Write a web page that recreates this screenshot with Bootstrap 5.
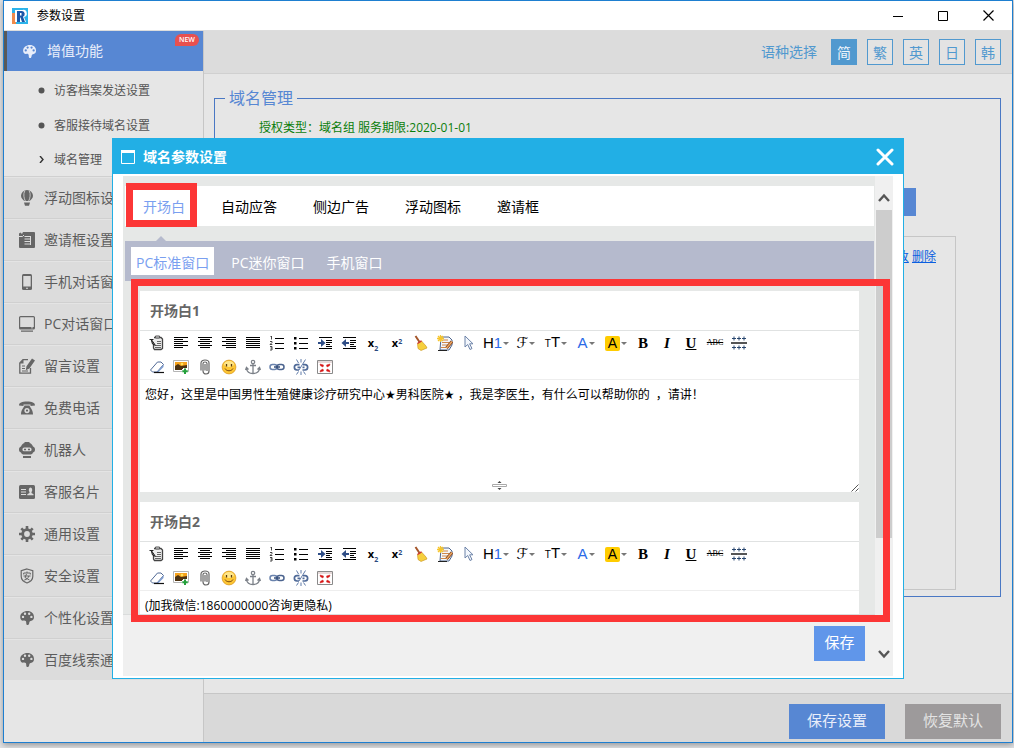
<!DOCTYPE html>
<html lang="zh-CN">
<head>
<meta charset="utf-8">
<meta name="viewport" content="width=device-width, initial-scale=1">
<title>参数设置</title>
<link href="https://cdn.jsdelivr.net/npm/bootstrap@5.3.0/dist/css/bootstrap.min.css" rel="stylesheet">
<style>
  body { font: 14px/20px "Open Sans", "DejaVu Sans", "Noto Sans CJK SC", sans-serif; background: #e2e3e5; color: #555; }
  button, textarea { font-family: inherit; }
  button { border: 0; background: none; padding: 0; color: inherit; }
  a { color: inherit; text-decoration: none; }
  svg { display: block; flex: none; }
  .fs12 { font-size: 12px; }

  .app-shell { min-height: 100vh; padding: 0 1px 5px 3px; }
  .app-window { border: 1px solid #1e7fd0; box-shadow: 0 2px 6px rgba(0,0,0,.35); background: #e6e6e6; }
  .title-bar { height: 30px; background: #fff; color: #000; padding: 0 18px 0 8px; border-bottom: 1px solid #ddd; gap: 9px; }
  .title-bar .win-controls { gap: 35px; }

  .side-bar { width: 200px; border-right: 1px solid #c6c6c6; }
  .side-top { height: 40px; background: #5787d3; border-left: 3px solid #595959; color: #e9eefa; padding-left: 15px; gap: 10px; }
  .new-tag { position: absolute; top: 3px; right: 4px; width: 24px; height: 12px; border-radius: 6px 6px 6px 0; background: #e8504f; color: #fff; font-size: 7px; font-weight: 600; line-height: 12px; text-align: center; }
  .side-sub { padding: 2px 0 0; }
  .side-sub a { height: 35px; padding-left: 34px; gap: 9px; }
  .side-sub li:last-child a { height: 33px; }
  .side-item { height: 42px; background: #dcdcdc; border-top: 1px solid #d0d0d0; box-shadow: inset 0 1px #e4e4e4; padding-left: 15px; gap: 9px; color: #5c5c5c; }
  .side-item svg { color: #666; }

  .lang-bar { height: 43px; background: #dcdcdc; border-bottom: 1px solid #d0d0d0; padding-right: 11px; gap: 10px; color: #5199cf; }
  .lang-bar button { width: 26px; height: 26px; border: 1px solid #5199cf; background: #e3e3e3; line-height: 26px; }
  .lang-bar button.active { background: #5199cf; color: #eef5fb; }
  .domain-area { padding: 15px 11px 0 10px; }
  .domain-set { border: 1px solid #4a78c4; padding: 0 44px 6px; }
  .domain-set legend { float: none; width: auto; margin: 0 0 0 -34px; padding: 0 4px; font-size: 16px; line-height: 18px; color: #5787d3; }
  .licence { color: #0a7d0a; padding-top: 11px; line-height: 20px; margin-bottom: 50px; }
  .add-btn { width: 96px; height: 28px; background: #5787d3; color: #fff; margin-right: 40px; }
  .domain-box { border: 1px solid #c6c6c6; min-height: 354px; margin-top: 20px; padding: 10px 19px; }
  .domain-box a { color: #0b5fe0; text-decoration: underline; }
  .foot-bar { background: #d9d9d9; border-top: 1px solid #c6c6c6; padding: 10px 11px 3px; gap: 20px; }
  .foot-bar button { width: 96px; height: 35px; padding-bottom: 3px; font-size: 15px; background: #5787d3; color: #e9eefa; }
  .foot-bar button.reset { background: #9d9a9b; color: #e4e4e4; }

  .dlg { position: absolute; top: 138px; left: 112px; right: 110px; height: 541px; border: 1px solid #22afe5; background: #fff; }
  .dlg-head { height: 35px; background: #22afe5; color: #fff; font-weight: 700; padding: 0 9px 0 8px; gap: 8px; }
  .dlg-body { padding: 2px 10px; min-height: 0; }
  .dlg-main { min-width: 0; }
  .dlg-scroll { background: #e6e8e7; padding: 10px 1px 0 2px; min-height: 0; overflow: hidden; border-bottom: 1px solid #dadcdc; }
  .dlg-foot { height: 61px; background: #f0f0f0; padding: 11px 10px 0; }
  .dlg-foot button { width: 51px; height: 35px; padding-bottom: 3px; font-size: 15px; background: #6096ea; color: #fff; }
  .tab-row { height: 40px; background: #fff; flex: none; color: #000; }
  .tab-row button { padding: 0 18px; height: 40px; line-height: 42px; }
  .tab-row button.active, .sub-row button.active { color: #7a9ff0; }
  .sub-row { position: relative; height: 40px; margin-top: 15px; background: #b5bacd; color: #fff; padding: 0 6px; gap: 12px; flex: none; }
  .sub-row::before { content: ""; position: absolute; left: 31px; top: -5px; border: 5px solid transparent; border-top: 0; border-bottom-color: #b5bacd; }
  .sub-row button { height: 28px; padding: 0 5px; line-height: 32px; }
  .sub-row button.active { background: #fff; }
  .mark-box { position: absolute; border: 7px solid #fc3636; pointer-events: none; }
  .mark-tab { top: -3px; bottom: -1px; left: 1px; right: 6px; }
  .mark-editors { top: 140px; left: 18px; right: 13px; bottom: 56px; }
  .editors { padding: 10px 15px 0; gap: 10px; }
  .editor { background: #fff; }
  .editor h2 { font-size: 14px; line-height: 39px; font-weight: 700; color: #666; margin: 0; padding-left: 10px; border-bottom: 1px solid #e0e2e2; }
  .tool-bar { padding: 0 5px; border-bottom: 1px solid #eee; color: #000; }
  .tool-bar button { width: 24px; height: 24px; display: flex; align-items: center; justify-content: center; }
  .tool-bar button.drop { width: 30px; gap: 1px; }
  .drop::after { content: ""; border: 3px solid transparent; border-top-color: #777; border-bottom: 0; }
  .editor textarea { display: block; width: 100%; height: 100px; border: 0; padding: 5px 5px 0; font-size: 12px; line-height: 20px; color: #000; resize: none; outline: 0; background: #fff; }
  .editor .grip-row { height: 12px; display: grid; grid-template-columns: 1fr auto 1fr; align-items: end; }
  .f-san { font-family: "Liberation Sans", sans-serif; font-size: 15px; }
  .t-small { font-size: 10px; }
  .c-blue { color: #2a6ae8; }
  .f-ser { font-family: "Liberation Serif", serif; font-weight: 700; font-size: 15px; line-height: 18px; }
  .f-scr { font-family: "DejaVu Sans", sans-serif; font-size: 15px; line-height: 16px; }
  .hl { background: #fc0; border-radius: 2px; width: 15px; line-height: 15px; font-size: 14px; }
  .f-ser.strike { font-size: 8px; font-weight: 400; line-height: 10px; }
  .pos-x { font-size: 11px; font-weight: 700; line-height: 14px; }
  .pos-x sub, .pos-x sup { font-size: 7px; color: #2b4a80; }
  .pos-x sub { bottom: -4px; }

  .bar-col { width: 18px; background: #f0f0f0; padding: 16px 1px 16px 1px; }
  .bar-thumb { flex: 0 0 328px; background: #cdcdcd; margin-top: 7px; }
</style>
</head>
<body>
<svg width="0" height="0" class="position-absolute" aria-hidden="true">
  <symbol id="palette" viewBox="0 0 16 16"><path fill="currentColor" fill-rule="evenodd" d="M8.500 1C4.500 1 1.200 3.500 1.200 7c0 2.600 1.500 3.900 3.300 3.600 1.700-.3 2.700.4 2.700 1.800 0 1.600.3 2.600 1.500 2.600s1.400-1.300 1.600-2.500c.2-1.200 1-1.600 2.200-1.800 1.500-.2 2.500-1.600 2.500-3.700C15 3.500 12.300 1 8.500 1zM4 5.700a1.200 1.200 0 1 0 0 2.400 1.200 1.200 0 0 0 0-2.400zM6 2.600a1.200 1.200 0 1 0 0 2.400 1.200 1.200 0 0 0 0-2.400zm4.200 0a1.200 1.200 0 1 0 0 2.400 1.200 1.200 0 0 0 0-2.400zm2.200 3.100a1.200 1.200 0 1 0 0 2.400 1.200 1.200 0 0 0 0-2.400z"/></symbol>
  <symbol id="balloon" viewBox="0 0 16 16"><path fill="currentColor" d="M8 0a6 5.800 0 0 0-6 5.800C2 8.200 4 9.800 5.300 11h5.400C12 9.800 14 8.200 14 5.800A6 5.800 0 0 0 8 0zM5 12.500h6L10 15.800H6z"/><path d="M5.800.8C4 4 5 8.500 6.300 11M10.200.8c1.800 3.200.8 7.700-.5 10.200" stroke="#dcdcdc" fill="none" stroke-width=".8"/></symbol>
  <symbol id="invite" viewBox="0 0 16 16"><path fill="currentColor" d="M0 1.500l1.500-1L3 2l1-2h11a1 1 0 0 1 1 1v14a1 1 0 0 1-1 1H1a1 1 0 0 1-1-1z"/><path d="M0 4.500h3.500L5 3M5.500 4.500h5.500M5.500 7h5.500M5.500 9.500h5.500M5.500 12h5.500M11.500 4v9" stroke="#dcdcdc" fill="none"/></symbol>
  <symbol id="phone" viewBox="0 0 16 16"><rect x="3" y="0" width="10" height="16" rx="1.500" fill="currentColor"/><path fill="#dcdcdc" d="M4.300 2h7.400v10.500H4.300zM7 13.800h2v1H7z"/></symbol>
  <symbol id="monitor" viewBox="0 0 16 16"><rect x=".6" y=".6" width="14.800" height="12.400" rx="1" fill="none" stroke="currentColor" stroke-width="1.200"/><path fill="currentColor" d="M1 11h14v2H1zM2 14.500h12v1.200H2z"/><path fill="#dcdcdc" d="M12 11.500h2v.8h-2z"/></symbol>
  <symbol id="note" viewBox="0 0 16 16"><path d="M9 1.600H4L.8 5v10.200h10.700V10" fill="none" stroke="currentColor" stroke-width="1.300"/><path fill="currentColor" d="M4.500 1v4.500H.5zM13 .5l3 2-5.600 8-3.600 1.700.7-4z"/><path d="M3 8h3M3 10.500h3M3 13h6" stroke="currentColor" stroke-width="1.200"/></symbol>
  <symbol id="tele" viewBox="0 0 16 16"><path fill="currentColor" fill-rule="evenodd" d="M0 5.500C0 2.500 3 1.500 8 1.500s8 1 8 4l-4.500.5V4.500h-7V6zM5.500 5.500h5c.5 2 3.500 4 3.500 9H2c0-5 3-7 3.500-9zm2.500 2.500a2.600 2.600 0 1 0 0 5.200A2.600 2.600 0 0 0 8 8zm0 1.500a1.100 1.100 0 1 1 0 2.200 1.100 1.100 0 0 1 0-2.200z"/></symbol>
  <symbol id="robot" viewBox="0 0 16 16"><path fill="currentColor" fill-rule="evenodd" d="M5.500 0h5v1C12.500 1.500 13.500 3 14 4.500c1.500.5 2 1.500 2 3s-.5 2.500-2 3c-.5 1.500-1.500 2-3 2H5c-1.500 0-2.500-.5-3-2-1.500-.5-2-1.500-2-3s.5-2.500 2-3C2.500 3 3.500 1.500 5.500 1zM5.300 5.500a1.900 1.900 0 0 0 0 3.800h5.400a1.900 1.900 0 0 0 0-3.800zM4 14h8v2H4z"/><path d="M5 7.500h6" stroke="currentColor" stroke-width="1.400" stroke-dasharray="2"/></symbol>
  <symbol id="idcard" viewBox="0 0 16 16"><rect y="1" width="16" height="14" rx="1.500" fill="currentColor"/><path d="M2 5.500h5M2 8h5M2 10.500h5" stroke="#dcdcdc"/><path fill="#dcdcdc" d="M11.500 3.500a2 2.500 0 0 1 1 4.400v1l2 1.300v1H8.300v-1l2.200-1.300v-1a2 2.500 0 0 1 1-4.400z"/></symbol>
  <symbol id="gear" viewBox="0 0 16 16"><circle cx="8" cy="8" r="4.300" fill="none" stroke="currentColor" stroke-width="2.800"/><path d="M8 0v3M8 13v3M0 8h3M13 8h3M2.300 2.300l2 2M11.700 11.700l2 2M2.300 13.700l2-2M11.700 4.300l2-2" stroke="currentColor" stroke-width="2.600"/></symbol>
  <symbol id="shield" viewBox="0 0 16 16"><path d="M8 1l5.800 1.800v5.500C13.800 12 11 14 8 15 5 14 2.200 12 2.200 8.300V2.800z" fill="none" stroke="currentColor" stroke-width="1.200"/><path d="M8 3.500V5M4.700 6.500V5h6.600v1.500M4.500 8h7M7.500 6L6 9.500l4.500 2.500M9.800 8c-.5 2-2 3.500-4.500 4" fill="none" stroke="currentColor"/></symbol>

  <symbol id="t-paste" viewBox="0 0 16 16"><path d="M5 2.500h7l1.500 1.500v9.500L12 14.500H5.500L4.500 13V9" fill="#eee" stroke="#444" stroke-width="1.300"/><path d="M6.500 1h4v2h-4z" fill="#ddd" stroke="#555"/><path d="M8 6.500h4M8 8.500h4M7 10.500h5M6 12.500h6" stroke="#666"/><path d="M.5 4.500h4M2 4l4.500 6.500L3.500 9z" stroke="#222" fill="#777"/></symbol>
  <symbol id="t-left" viewBox="0 0 16 16"><path d="M1 2.500h14M1 4.500h9M1 6.500h14M1 8.500h9M1 10.500h14M1 12.500h9" stroke="#000" shape-rendering="crispEdges"/></symbol>
  <symbol id="t-center" viewBox="0 0 16 16"><path d="M1 2.500h14M3 4.500h10M1 6.500h14M3 8.500h10M1 10.500h14M3 12.500h10" stroke="#000" shape-rendering="crispEdges"/></symbol>
  <symbol id="t-right" viewBox="0 0 16 16"><path d="M1 2.500h14M5 4.500h10M1 6.500h14M5 8.500h10M1 10.500h14M5 12.500h10" stroke="#000" shape-rendering="crispEdges"/></symbol>
  <symbol id="t-full" viewBox="0 0 16 16"><path d="M1 2.500h14M1 4.500h14M1 6.500h14M1 8.500h14M1 10.500h14M1 12.500h14" stroke="#000" shape-rendering="crispEdges"/></symbol>
  <symbol id="t-ol" viewBox="0 0 16 16"><path d="M6 3.500h9M6 8.500h9M6 13.500h9" stroke="#000" shape-rendering="crispEdges"/><path d="M1.500 2L2.500 1v3.500M1 6.500h2v1L1 9.500h2.300M1 11.500h2v3.500H1M1.500 13h1.500" stroke="#333" stroke-width=".9" fill="none"/></symbol>
  <symbol id="t-ul" viewBox="0 0 16 16"><path d="M6 3.500h9M6 8.500h9M6 13.500h9" stroke="#000" shape-rendering="crispEdges"/><path d="M1 2h2.500v2.500H1zM1 7h2.500v2.500H1zM1 12h2.500v2.500H1z"/></symbol>
  <symbol id="t-in" viewBox="0 0 16 16"><path d="M2 2.500h13M9 5.500h6M9 7.500h6M9 9.500h4M9 11.500h6M2 13.500h13" stroke="#000" shape-rendering="crispEdges"/><path d="M1 7h3V4L8.500 8 4 12V9H1z" fill="#2e4d86"/></symbol>
  <symbol id="t-out" viewBox="0 0 16 16"><path d="M2 2.500h13M9 5.500h6M9 7.500h6M9 9.500h4M9 11.500h6M2 13.500h13" stroke="#000" shape-rendering="crispEdges"/><path d="M8 7H5V4L.5 8 5 12V9h3z" fill="#2e4d86"/></symbol>
  <symbol id="t-broom" viewBox="0 0 16 16"><path d="M2.500 1L6.500 7" stroke="#a4562a" stroke-width="2"/><path d="M4.500 8.500l4-2.500L13 11l1 2-6 2.500-3-2z" fill="#f6cf3e" stroke="#c8921a" stroke-width=".6"/><path d="M4.500 8.500l4-2.700" stroke="#c33" stroke-width="1.400"/></symbol>
  <symbol id="t-format" viewBox="0 0 16 16"><path d="M4 2h8l3 3v5l-3 5H3z" fill="#f4f7fb" stroke="#4c648c"/><path d="M6 5h5M5 7.500h7M5 10h6M4 12.500h5" stroke="#d0884a"/><path d="M3.500 0v7M0 3.500h7M1 1l5 5M6 1L1 6" stroke="#f7c52b" stroke-width="1.300"/><path d="M15 6.500L9.500 13" stroke="#7b3f1d" stroke-width="3"/><path d="M15 6.500L9.500 13" stroke="#f0a860" stroke-width="1.500"/><path d="M1 15.500h9" stroke="#222"/></symbol>
  <symbol id="t-cursor" viewBox="0 0 16 16"><path d="M4 1v11l2.700-2.500L9 14.500l2-1-2.400-4.700H12z" fill="#f3f7fd" stroke="#6d83a8"/></symbol>
  <symbol id="t-break" viewBox="0 0 16 16"><path d="M0 8h16" stroke="#555" stroke-width="2"/><path d="M1 3.500h4M6 3.500h4M11 3.500h4M3 1.500v4M8 1.500v4M13 1.500v4M1 12.500h4M6 12.500h4M11 12.500h4M3 10.500v4M8 10.500v4M13 10.500v4" stroke="#29466f"/></symbol>
  <symbol id="t-eraser" viewBox="0 0 16 16"><path d="M1.500 11L8.500 3h3.500l2.500 2.500L8 13H3.500z" fill="#fff" stroke="#526a96"/><path d="M8 13l6.500-7.500v2.500L9 13.500z" fill="#7f9cd0"/><path d="M5 13.500h10" stroke="#111" stroke-width="1.200"/></symbol>
  <symbol id="t-image" viewBox="0 0 16 16"><path d="M.5 1.500h15v11H.5z" fill="#fff" stroke="#b5b5b5"/><path d="M2 3h12v5H2z" fill="#f6a21c"/><path d="M2 7l3-2 3 2 6-1v5H2z" fill="#4d3210"/><circle cx="9" cy="5" r="1.300" fill="#ffe35a"/><path d="M12 9v6M9 12h6" stroke="#fff" stroke-width="4"/><path d="M12 9.500v5.500M9.300 12.300h5.500" stroke="#25a03c" stroke-width="2"/></symbol>
  <symbol id="t-clip" viewBox="0 0 16 16"><path d="M8 5v6.500M4 11.500V4c0-4 8-4 8 0v8c0 4-6 4-6 0V4.500c0-2 4-2 4 0V12" fill="none" stroke="#666" stroke-width="1.200"/></symbol>
  <symbol id="t-smile" viewBox="0 0 16 16"><circle cx="8" cy="8" r="6.900" fill="#fdc634" stroke="#d7941b" stroke-width=".7"/><ellipse cx="8" cy="5" rx="5" ry="3" fill="#ffe68a"/><path d="M5.500 5v2.500M10.500 5v2.500" stroke="#5a3a0c" stroke-width="1.300"/><path d="M4 9.500c1.500 3 6.500 3 8 0" fill="none" stroke="#7b4a11"/></symbol>
  <symbol id="t-anchor" viewBox="0 0 16 16"><circle cx="8" cy="3" r="1.700" fill="none" stroke="#7b8088" stroke-width="1.200"/><path d="M8 5v9.500M5 6.500h6M1.500 9.500C2 13 5 14.500 8 14.500s6-1.500 6.500-5M.5 11l1-2.500 2 2M15.500 11l-1-2.500-2 2" fill="none" stroke="#7b8088" stroke-width="1.300"/></symbol>
  <symbol id="t-link" viewBox="0 0 16 16"><rect x="1" y="5.500" width="7" height="5" rx="2.500" fill="none" stroke="#6a83ad" stroke-width="1.500"/><rect x="8" y="5.500" width="7" height="5" rx="2.500" fill="none" stroke="#4c648f" stroke-width="1.500"/><path d="M5 8h6" stroke="#334c78" stroke-width="1.500"/></symbol>
  <symbol id="t-unlink" viewBox="0 0 16 16"><path d="M6.500 5.700H4C.5 5.700.5 11 4 11h2M10 5.700h2c3.500 0 3.500 5.300 0 5.300H9.500M4.500 8.300H7M9.500 8.300h2" fill="none" stroke="#4f6a98" stroke-width="1.700"/><path d="M8 0v3.500M3.500.5l2 3.500M12.500.5L6 11M8 12.500V16M3.500 15.500l2-3M12.500 15.500l-2-3" stroke="#5f7aa8"/></symbol>
  <symbol id="t-screen" viewBox="0 0 16 16"><path d="M.5 1.500h15v13H.5z" fill="#fff" stroke="#8a8a8a"/><path d="M1 3h14" stroke="#cdb5b5"/><path d="M3 5l3.500 1L6 8 3.500 6.800zM13 5L9.500 6l.5 2 2.500-1.200zM3 13l3.500-1L6 10l-2.500 1.200zM13 13l-3.500-1 .5-2 2.500 1.200z" fill="#d11" stroke="#c22" stroke-width=".5"/></symbol>
</svg>

<template id="tools">
  <div class="d-flex">
    <button type="button" aria-label="粘贴"><svg width="16" height="16"><use href="#t-paste"/></svg></button>
    <button type="button" aria-label="左对齐"><svg width="16" height="16"><use href="#t-left"/></svg></button>
    <button type="button" aria-label="居中"><svg width="16" height="16"><use href="#t-center"/></svg></button>
    <button type="button" aria-label="右对齐"><svg width="16" height="16"><use href="#t-right"/></svg></button>
    <button type="button" aria-label="两端对齐"><svg width="16" height="16"><use href="#t-full"/></svg></button>
    <button type="button" aria-label="编号"><svg width="16" height="16"><use href="#t-ol"/></svg></button>
    <button type="button" aria-label="项目符号"><svg width="16" height="16"><use href="#t-ul"/></svg></button>
    <button type="button" aria-label="增加缩进"><svg width="16" height="16"><use href="#t-in"/></svg></button>
    <button type="button" aria-label="减少缩进"><svg width="16" height="16"><use href="#t-out"/></svg></button>
    <button type="button"><span class="pos-x">x<sub>2</sub></span></button>
    <button type="button"><span class="pos-x">x<sup>2</sup></span></button>
    <button type="button" aria-label="清理"><svg width="16" height="16"><use href="#t-broom"/></svg></button>
    <button type="button" aria-label="排版"><svg width="16" height="16"><use href="#t-format"/></svg></button>
    <button type="button" aria-label="全选"><svg width="16" height="16"><use href="#t-cursor"/></svg></button>
    <button type="button" class="drop f-san"><span>H<span class="c-blue">1</span></span></button>
    <button type="button" class="drop f-scr">ℱ</button>
    <button type="button" class="drop f-san"><span><span class="t-small">T</span>T</span></button>
    <button type="button" class="drop f-san"><span class="c-blue">A</span></button>
    <button type="button" class="drop f-san"><span class="hl">A</span></button>
    <button type="button" class="f-ser">B</button>
    <button type="button" class="f-ser fst-italic">I</button>
    <button type="button" class="f-ser text-decoration-underline">U</button>
    <button type="button" class="f-ser strike text-decoration-line-through">ABC</button>
    <button type="button" aria-label="分页"><svg width="16" height="16"><use href="#t-break"/></svg></button>
  </div>
  <div class="d-flex">
    <button type="button" aria-label="清除格式"><svg width="16" height="16"><use href="#t-eraser"/></svg></button>
    <button type="button" aria-label="图片"><svg width="16" height="16"><use href="#t-image"/></svg></button>
    <button type="button" aria-label="附件"><svg width="16" height="16"><use href="#t-clip"/></svg></button>
    <button type="button" aria-label="表情"><svg width="16" height="16"><use href="#t-smile"/></svg></button>
    <button type="button" aria-label="锚点"><svg width="16" height="16"><use href="#t-anchor"/></svg></button>
    <button type="button" aria-label="链接"><svg width="16" height="16"><use href="#t-link"/></svg></button>
    <button type="button" aria-label="取消链接"><svg width="16" height="16"><use href="#t-unlink"/></svg></button>
    <button type="button" aria-label="全屏"><svg width="16" height="16"><use href="#t-screen"/></svg></button>
  </div>
</template>

<div class="app-shell d-flex">
  <div class="app-window d-flex flex-column flex-fill">
    <header class="title-bar d-flex align-items-center flex-shrink-0 fs12">
      <svg width="16" height="16" viewBox="0 0 16 16"><path fill="#2bb3ea" d="M0 0h16v16H0z"/><path fill="#f08a4b" d="M0 5h4v11H0z"/><path fill="#fff" d="M3 2h7.500a3.500 3.500 0 0 1 1.500 7l2 5H3z"/><path fill="#1d57a8" fill-rule="evenodd" d="M5 3h5a3 3 0 0 1 1 5.700L13 14h-3L8.500 9.500H8V14H5zm3 2v2.500h1.500V5z"/></svg>
      <span>参数设置</span>
      <div class="win-controls d-flex align-items-center ms-auto">
        <button type="button" aria-label="最小化"><svg width="10" height="10"><path d="M0 5.500h10" stroke="#000"/></svg></button>
        <button type="button" aria-label="最大化"><svg width="10" height="10"><path d="M.5.500h9v9h-9z" fill="none" stroke="#000"/></svg></button>
        <button type="button" aria-label="关闭窗口"><svg width="11" height="11"><path d="M.5.500l10 10M10.500.500l-10 10" stroke="#000" stroke-width="1.200"/></svg></button>
      </div>
    </header>

    <div class="d-flex flex-fill">
      <nav class="side-bar flex-shrink-0">
        <a href="#" class="side-top d-flex align-items-center position-relative"><svg width="15" height="15"><use href="#palette"/></svg>增值功能<span class="new-tag">NEW</span></a>
        <ul class="side-sub list-unstyled m-0 fs12">
          <li><a href="#" class="d-flex align-items-center"><svg width="7" height="7"><circle cx="3.500" cy="3.500" r="3" fill="#555"/></svg>访客档案发送设置</a></li>
          <li><a href="#" class="d-flex align-items-center"><svg width="7" height="7"><circle cx="3.500" cy="3.500" r="3" fill="#555"/></svg>客服接待域名设置</a></li>
          <li><a href="#" class="d-flex align-items-center"><svg width="7" height="7"><path d="M2 0l3 3.500L2 7" fill="none" stroke="#333" stroke-width="1.400"/></svg>域名管理</a></li>
        </ul>
        <a href="#" class="side-item d-flex align-items-center"><svg width="16" height="16"><use href="#balloon"/></svg>浮动图标设置</a>
        <a href="#" class="side-item d-flex align-items-center"><svg width="16" height="16"><use href="#invite"/></svg>邀请框设置</a>
        <a href="#" class="side-item d-flex align-items-center"><svg width="16" height="16"><use href="#phone"/></svg>手机对话窗口</a>
        <a href="#" class="side-item d-flex align-items-center"><svg width="16" height="16"><use href="#monitor"/></svg>PC对话窗口</a>
        <a href="#" class="side-item d-flex align-items-center"><svg width="16" height="16"><use href="#note"/></svg>留言设置</a>
        <a href="#" class="side-item d-flex align-items-center"><svg width="16" height="16"><use href="#tele"/></svg>免费电话</a>
        <a href="#" class="side-item d-flex align-items-center"><svg width="16" height="16"><use href="#robot"/></svg>机器人</a>
        <a href="#" class="side-item d-flex align-items-center"><svg width="16" height="16"><use href="#idcard"/></svg>客服名片</a>
        <a href="#" class="side-item d-flex align-items-center"><svg width="16" height="16"><use href="#gear"/></svg>通用设置</a>
        <a href="#" class="side-item d-flex align-items-center"><svg width="16" height="16"><use href="#shield"/></svg>安全设置</a>
        <a href="#" class="side-item d-flex align-items-center"><svg width="16" height="16"><use href="#palette"/></svg>个性化设置</a>
        <a href="#" class="side-item d-flex align-items-center"><svg width="16" height="16"><use href="#palette"/></svg>百度线索通</a>
      </nav>

      <main class="d-flex flex-column flex-fill">
        <div class="lang-bar d-flex align-items-center justify-content-end">
          <span class="me-1">语种选择</span>
          <button type="button" class="active">简</button>
          <button type="button">繁</button>
          <button type="button">英</button>
          <button type="button">日</button>
          <button type="button">韩</button>
        </div>
        <div class="domain-area flex-fill">
          <fieldset class="domain-set">
            <legend>域名管理</legend>
            <div class="licence fs12">授权类型：域名组 服务期限:2020-01-01</div>
            <div class="d-flex justify-content-end"><button type="button" class="add-btn" aria-label="添加域名"></button></div>
            <div class="domain-box fs12 text-end"><a href="#">修改</a> <a href="#">删除</a></div>
          </fieldset>
        </div>
        <footer class="foot-bar d-flex justify-content-end">
          <button type="button">保存设置</button>
          <button type="button" class="reset">恢复默认</button>
        </footer>
      </main>
    </div>
  </div>
</div>

<section class="dlg d-flex flex-column" role="dialog" aria-labelledby="dlg-title">
  <header class="dlg-head d-flex align-items-center flex-shrink-0">
    <svg width="14" height="14"><path d="M.5 1.500h13v12H.5z" fill="none" stroke="#fff"/><path d="M0 0h14v3H0z" fill="#fff"/></svg>
    <span id="dlg-title">域名参数设置</span>
    <button type="button" class="ms-auto" aria-label="关闭"><svg width="18" height="18"><path d="M2 2l14 14M16 2L2 16" stroke="#fff" stroke-width="3" stroke-linecap="round"/></svg></button>
  </header>
  <div class="dlg-body d-flex flex-fill">
    <div class="dlg-main d-flex flex-column flex-fill">
      <div class="dlg-scroll d-flex flex-column flex-fill">
        <div class="tab-row d-flex">
          <button type="button" class="active position-relative">开场白<span class="mark-box mark-tab"></span></button>
          <button type="button">自动应答</button>
          <button type="button">侧边广告</button>
          <button type="button">浮动图标</button>
          <button type="button">邀请框</button>
        </div>
        <div class="sub-row d-flex align-items-center">
          <button type="button" class="active">PC标准窗口</button>
          <button type="button">PC迷你窗口</button>
          <button type="button">手机窗口</button>
        </div>
        <div class="editors d-flex flex-column">
          <div class="editor">
            <h2><label for="open1">开场白1</label></h2>
            <div class="tool-bar"></div>
            <textarea id="open1" spellcheck="false">您好，这里是中国男性生殖健康诊疗研究中心★男科医院★ ，我是李医生，有什么可以帮助你的  ，请讲！</textarea>
            <div class="grip-row">
              <svg width="16" height="11" style="grid-column:2"><path d="M.5 3.500h14v2H.5z" fill="#fff" stroke="#aaa"/><path d="M7.500 0l2 2h-4zM7.500 9l2-2h-4z" fill="#444"/></svg>
              <svg width="8" height="12" class="ms-auto"><path d="M.5 11.500L7.500 4.500M4.500 11.500L7.500 8.500" stroke="#555"/></svg>
            </div>
          </div>
          <div class="editor">
            <h2><label for="open2">开场白2</label></h2>
            <div class="tool-bar"></div>
            <textarea id="open2" spellcheck="false">(加我微信:1860000000咨询更隐私)</textarea>
          </div>
        </div>
      </div>
      <div class="dlg-foot d-flex justify-content-end align-items-start flex-shrink-0"><button type="button">保存</button></div>
    </div>
    <div class="bar-col d-flex flex-column align-items-stretch flex-shrink-0">
      <svg width="16" height="11" class="flex-shrink-0"><path d="M3 9l5-5.500L13 9" fill="none" stroke="#555" stroke-width="2.400"/></svg>
      <div class="bar-thumb"></div>
      <svg width="16" height="11" class="mt-auto"><path d="M3 2l5 5.500L13 2" fill="none" stroke="#555" stroke-width="2.400"/></svg>
    </div>
  </div>
  <div class="mark-box mark-editors"></div>
</section>

<script src="https://cdn.jsdelivr.net/npm/bootstrap@5.3.0/dist/js/bootstrap.bundle.min.js"></script>
<script>
  const tools = document.getElementById('tools').content;
  document.querySelectorAll('.tool-bar').forEach(bar => bar.append(tools.cloneNode(true)));
</script>
</body>
</html>
